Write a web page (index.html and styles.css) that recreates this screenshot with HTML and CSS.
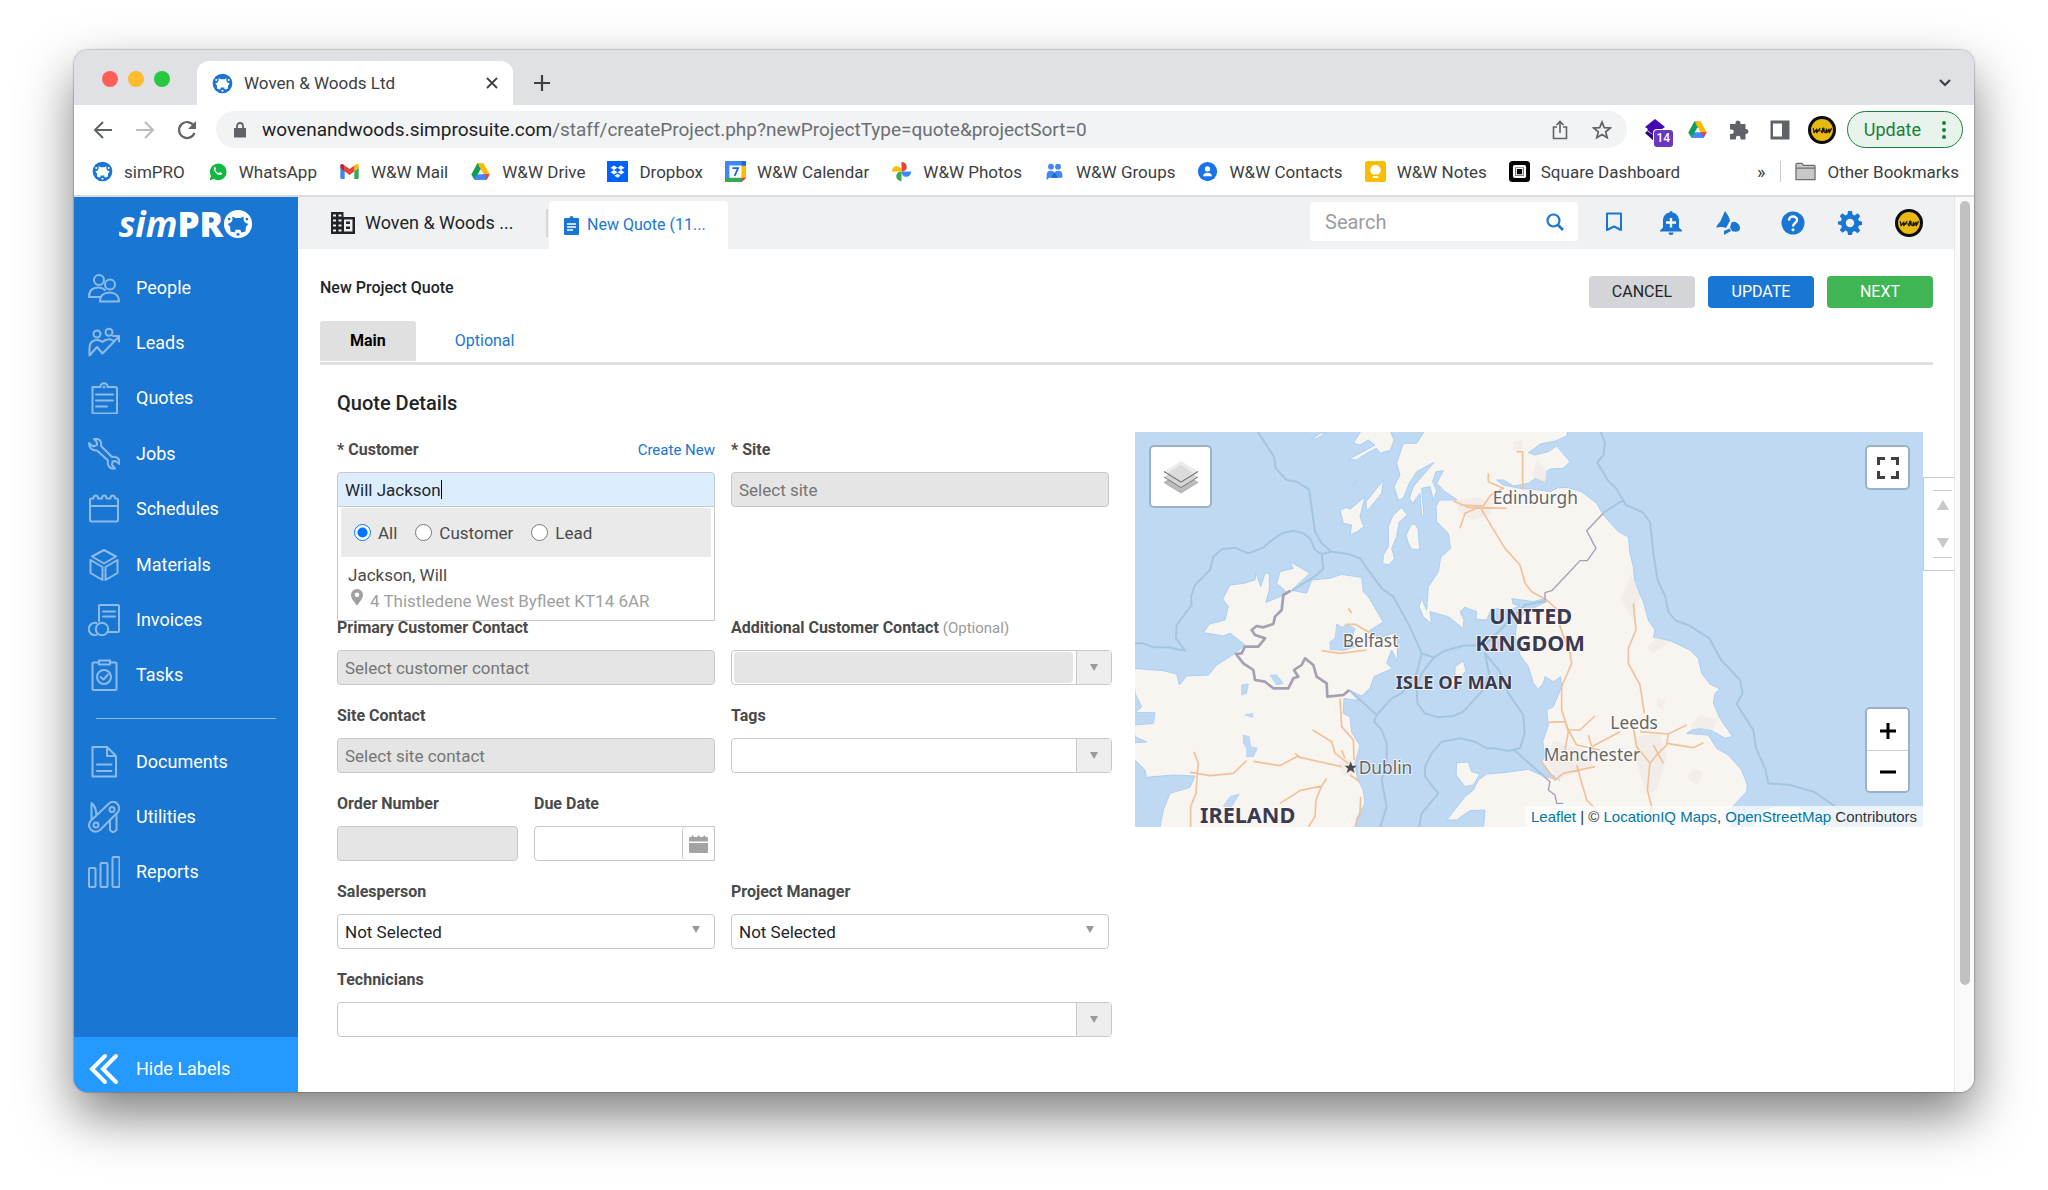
FILE: index.html
```html
<!DOCTYPE html>
<html lang="en">
<head>
<meta charset="utf-8">
<title>Woven &amp; Woods Ltd</title>
<link rel="stylesheet" href="styles.css">
</head>
<body>
<svg class="sprite" aria-hidden="true">
  <symbol id="gear-o" viewBox="0 0 32 32">
    <path fill-rule="evenodd" fill="currentColor" d="M16 1a15 15 0 1 1 0 30a15 15 0 0 1 0-30zM10 8L13.500 9.500H18.500L22 8L22 12L23.500 14.500L27 16L24.500 19L24 24L19.500 25L18.500 22H13.500L12.500 25L8 24L7.500 19L5 16L8.500 14.500L10 12z"/>
    <g fill="var(--dot)"><circle cx="6.500" cy="10.700" r="1.500"/><circle cx="25.500" cy="10.700" r="1.500"/><circle cx="16" cy="27" r="1.600"/></g>
  </symbol>
  <symbol id="drive" viewBox="0 0 24 24">
    <path fill="#0f9d58" d="M8.500 2.500h3.500l2.500 4.500L5 21.500 1.500 15.500z"/><path fill="#ffba00" d="M8.500 2.500h7l7 12.500h-7z"/><path fill="#4285f4" d="M8.500 15h14L19 21.500H5z"/><path fill="#ea4335" d="M15.500 15h7L19 21.500z"/><path fill="#4285f4" d="M5 21.500L8.500 15h8L19 21.500z"/><path fill="#fff" d="M12 9.500l3 5.500H9z"/>
  </symbol>
  <symbol id="avatar" viewBox="0 0 32 32">
    <circle cx="16" cy="16" r="16" fill="#0b0b0b"/><circle cx="16" cy="16" r="12.500" fill="#e8b90f"/>
    <path d="M6 14l1 5 3-4 0 4 4-5M17 19c-3 0-1-2.500.5-3-2-1 0-3 .8-1.500s-2.500 3 1.700 4.500l1.500-2M21 14.500l.5 4.500 2.500-4 .3 4 2.700-5" fill="none" stroke="#1c1804" stroke-width="1.500" stroke-linejoin="round"/><path d="M8 17h15" stroke="#1c1804"/>
  </symbol>
</svg>

<main class="window">
  <header class="tabstrip">
    <div class="lights"><i class="red"></i><i class="amber"></i><i class="green"></i></div>
    <div class="browser-tab">
      <svg class="ico21 brand"><use href="#gear-o"/></svg>
      <span class="grow">Woven &amp; Woods Ltd</span>
      <button class="bare" aria-label="Close tab"><svg width="12" height="12" viewBox="0 0 12 12"><path d="M1 1l10 10M11 1L1 11" stroke="#3c4043" stroke-width="1.800"/></svg></button>
    </div>
    <button class="bare new-tab" aria-label="New tab"><svg width="16" height="16" viewBox="0 0 16 16"><path d="M8 0v16M0 8h16" stroke="#3c4043" stroke-width="2.200"/></svg></button>
    <button class="bare tab-menu" aria-label="Search tabs"><svg width="12" height="8" viewBox="0 0 12 8"><path d="M1 1l5 5 5-5" fill="none" stroke="#3c4043" stroke-width="2.200"/></svg></button>
  </header>

  <div class="toolbar">
    <nav class="history" aria-label="History">
      <button class="bare" aria-label="Back"><svg width="20" height="20" viewBox="0 0 20 20"><path d="M19 10H2M10 2l-8 8 8 8" fill="none" stroke="#5f6368" stroke-width="2"/></svg></button>
      <button class="bare" aria-label="Forward"><svg width="20" height="20" viewBox="0 0 20 20"><path d="M1 10h17M10 2l8 8-8 8" fill="none" stroke="#babcbe" stroke-width="2"/></svg></button>
      <button class="bare" aria-label="Reload"><svg width="20" height="20" viewBox="0 0 20 20"><path d="M17.500 13a8 8 0 1 1-.8-7.500" fill="none" stroke="#5f6368" stroke-width="2.200"/><path d="M19 1v8h-8z" fill="#5f6368"/></svg></button>
    </nav>
    <div class="omnibox">
      <svg width="12" height="16" viewBox="0 0 12 16"><path d="M0 6h12v9.500H0z" fill="#5f6368"/><path d="M3 7V4a3 3 0 0 1 6 0v3" fill="none" stroke="#5f6368" stroke-width="1.800"/></svg>
      <span class="url grow"><b>wovenandwoods.simprosuite.com</b>/staff/createProject.php?newProjectType=quote&amp;projectSort=0</span>
      <button class="bare" aria-label="Share"><svg width="16" height="20" viewBox="0 0 16 20"><path d="M5 7H1.500v11.500h13V7H11M8 13V2M4.500 5L8 1.500 11.500 5" fill="none" stroke="#5f6368" stroke-width="1.600"/></svg></button>
      <button class="bare" aria-label="Bookmark this tab"><svg width="20" height="20" viewBox="0 0 20 20"><path d="M10 2l2.300 5.600 6 .4-4.600 3.900 1.500 5.900L10 14.600l-5.200 3.200 1.500-5.900L1.700 8l6-.4z" fill="none" stroke="#5f6368" stroke-width="1.700"/></svg></button>
    </div>
    <div class="extensions">
      <button class="bare badge-host" aria-label="Layers extension"><svg width="22" height="24" viewBox="0 0 22 24"><path d="M1 15l2-2 8 5 8-5 2 2-10 9z" fill="#2d0a7a"/><path d="M11 1l10 8-3 2 1 1-8 6-8-6 1-1-3-2z" fill="#4706b3"/></svg><span class="badge">14</span></button>
      <button class="bare" aria-label="Drive"><svg width="21" height="21"><use href="#drive"/></svg></button>
      <button class="bare" aria-label="Extensions"><svg width="20" height="20" viewBox="0 0 20 20"><path fill="#5f6368" d="M1 4h5.500V3a2.500 2.500 0 0 1 5 0v1H16.500V9h.5a2.500 2.500 0 0 1 0 5h-.5v5.500H11.500V18a2.300 2.300 0 0 0-4.600 0v1.500H1V14h1.500a2.300 2.300 0 0 0 0-4.600H1z"/></svg></button>
      <button class="bare" aria-label="Side panel"><svg width="20" height="20" viewBox="0 0 20 20"><path fill="#5f6368" fill-rule="evenodd" d="M.5.500h19v19H.5zM3 3.500v13h9v-13z"/></svg></button>
      <button class="bare" aria-label="Profile"><svg width="28" height="28"><use href="#avatar"/></svg></button>
      <button class="update">Update <svg width="4" height="18" viewBox="0 0 4 18" fill="#188038"><circle cx="2" cy="2" r="2"/><circle cx="2" cy="9" r="2"/><circle cx="2" cy="16" r="2"/></svg></button>
    </div>
  </div>

  <nav class="bookmarks" aria-label="Bookmarks">
    <a href="#"><svg class="ico21 brand"><use href="#gear-o"/></svg>simPRO</a>
    <a href="#"><svg class="ico21" viewBox="0 0 24 24"><path d="M3 22l1.500-5a9.500 9.500 0 1 1 3.500 3.600z" fill="#10b93f"/><path d="M8.500 7c-2 2 .5 5.500 2.500 7.200s5 2.800 6 .8c.5-1.200-.2-1.300-2-2.200-1.200-.3-1.200 1-1.900 1-1.500-.5-3-2-3.600-3.500.2-.6 1-.9.8-1.600C9.600 7 9.500 6.300 8.500 7z" fill="#fff"/></svg>WhatsApp</a>
    <a href="#"><svg class="ico21" viewBox="0 0 24 24"><path d="M1.500 8v11q0 1.500 1.500 1.500h3.500V11z" fill="#4285f4"/><path d="M17.500 11v9.500H21q1.500 0 1.500-1.500V8z" fill="#34a853"/><path d="M17.500 5l2-1.200c1.600-1 3 .2 3 1.700V8l-5 4z" fill="#fbbc04"/><path d="M6.500 12V5l5.500 4.200L17.500 5v7L12 16z" fill="#ea4335"/><path d="M1.500 5.500c0-1.500 1.400-2.700 3-1.700l2 1.200v7l-5-4z" fill="#c5221f"/></svg>W&amp;W Mail</a>
    <a href="#"><svg class="ico21"><use href="#drive"/></svg>W&amp;W Drive</a>
    <a href="#"><svg class="ico21" viewBox="0 0 24 24"><path d="M0 0h24v24H0z" fill="#0061fe"/><path d="M8 5l4 2.600-4 2.600-4-2.600zM16 5l4 2.600-4 2.600-4-2.600zM8 10.200l4 2.600-4 2.600-4-2.600zM16 10.200l4 2.600-4 2.600-4-2.600zM12 14.500l3.500 2.300L12 19l-3.500-2.200z" fill="#fff"/></svg>Dropbox</a>
    <a href="#"><svg class="ico21" viewBox="0 0 24 24"><path d="M0 1q0-1 1-1h22q1 0 1 1v23H0z" fill="#4285f4"/><path d="M19 5h5v15h-5z" fill="#fbbc04"/><path d="M0 19h19v5H1q-1 0-1-1z" fill="#34a853"/><path d="M19 19h5l-5 5z" fill="#ea4335"/><path d="M24 20v4h-5z" fill="#fff"/><path d="M19 0h4q1 0 1 1v4h-5z" fill="#1967d2"/><path d="M5 5h14v14H5z" fill="#fff"/><path d="M8.500 8h6.500l-4 9" fill="none" stroke="#1967d2" stroke-width="2"/></svg>W&amp;W Calendar</a>
    <a href="#"><svg class="ico21" viewBox="0 0 24 24"><path d="M12 1c4 0 6 3 6 5.500S16.500 12 12 12z" fill="#ea4335"/><path d="M23 12c0 4-3 6-5.500 6S12 16.500 12 12z" fill="#4285f4"/><path d="M12 23c-4 0-6-3-6-5.500S7.500 12 12 12z" fill="#34a853"/><path d="M1 12c0-4 3-6 5.500-6S12 7.500 12 12z" fill="#fbbc04"/></svg>W&amp;W Photos</a>
    <a href="#"><svg class="ico21" viewBox="0 0 24 24" fill="#4285f4"><circle cx="8" cy="6.500" r="3.300"/><circle cx="16" cy="6.500" r="3.300"/><path d="M3 22v-6q0-5 5-5 3 0 4 2 1-2 4-2 5 0 5 5v3H6z"/><path d="M8 19l4-6 4 6z" fill="#1967d2"/></svg>W&amp;W Groups</a>
    <a href="#"><svg class="ico21" viewBox="0 0 24 24"><circle cx="12" cy="12" r="11" fill="#1a73e8"/><circle cx="12" cy="9" r="3" fill="#fff"/><path d="M7 17.500q0-4 5-4t5 4z" fill="#fff"/></svg>W&amp;W Contacts</a>
    <a href="#"><svg class="ico21" viewBox="0 0 24 24"><rect width="24" height="24" rx="3" fill="#fbbc04"/><path d="M9 15.500a6 6 0 1 1 6 0z" fill="#fff"/><path d="M9 17h6v2.500H9z" fill="#fff"/></svg>W&amp;W Notes</a>
    <a href="#"><svg class="ico21" viewBox="0 0 24 24"><rect width="24" height="24" rx="4" fill="#000"/><rect x="4.500" y="4.500" width="15" height="15" rx="2" fill="#fff"/><rect x="7" y="7" width="10" height="10" rx="1"/><path d="M7.500 7.500h9v9h-9z" fill="#fff"/><path d="M9 9h6v6H9z"/></svg>Square Dashboard</a>
    <span class="grow"></span>
    <button class="bare more" aria-label="More bookmarks">»</button>
    <a href="#" class="other"><svg class="ico21" viewBox="0 0 22 20"><path d="M1 18.500v-16q0-1 1-1h5l2 2h11q1 0 1 1v14z" fill="#c8c8c8" stroke="#6e6e6e" stroke-width="1.300"/><path d="M1 6.500h20" stroke="#6e6e6e" stroke-width="1.300"/></svg>Other Bookmarks</a>
  </nav>

  <div class="app">
    <aside class="sidebar">
      <a class="logo" href="#" aria-label="simPRO"><em>sim</em><strong>PR</strong><svg width="30" height="30"><use href="#gear-o"/></svg></a>
      <ul class="menu main-menu">
        <li><a href="#"><svg class="ico32" viewBox="0 0 32 32"><circle cx="11" cy="8" r="5"/><circle cx="22" cy="12.500" r="5"/><path d="M13 25H1c0-7 4-9.500 9.500-9.500 3 0 5 1 6.500 2.500M12 29.500h19c0-6-4-9-9.500-9s-9.500 3-9.500 9z"/></svg>People</a></li>
        <li><a href="#"><svg class="ico32" viewBox="0 0 32 32"><circle cx="9" cy="7" r="3.500"/><circle cx="21" cy="5.300" r="3.500"/><path d="M1.500 28.500V21c0-8 8-10 13-6 3-3 7-3.500 10.500-1.500M1.500 28.500L9 20l5.500 6.500L30 10.500M25 9h6v5.500"/></svg>Leads</a></li>
        <li><a href="#"><svg class="ico32" viewBox="0 0 32 32"><path d="M4.500 5h8c0-5 7-5 7 0h8q1.500 0 1.500 1.500v24q0 1-1 1H5.500q-1 0-1-1zM8 12.500h17M8 18.500h17M8 24.500h11"/><circle cx="16" cy="5" r=".6"/></svg>Quotes</a></li>
        <li><a href="#"><svg class="ico32" viewBox="0 0 32 32"><path d="M6 1c5-1 8 2 7 7l11 11c5-1 8 2 7.500 7l-4-3-3 .5L24 27l3 3.500c-5 1-8-3-7-8L9 12.500C4 13 1 10 1 5l4 3.500L9 7l-.5-3.500z"/></svg>Jobs</a></li>
        <li><a href="#"><svg class="ico32" viewBox="0 0 32 32"><path d="M2 13h28M2 7q0-1.500 1.500-1.500h2c0-4 4.500-4 4.500 0h4c0-4 4.500-4 4.500 0h4c0-4 4.500-4 4.500 0h1.500Q30 5.500 30 7v20q0 1.500-1.500 1.500h-25Q2 28.500 2 27z"/></svg>Schedules</a></li>
        <li><a href="#"><svg class="ico32" viewBox="0 0 32 32"><path d="M16 1l12 6.500-12 7-12-7zM2.500 11l12 7v13l-12-7zM29.500 11l-12 7v13l12-7z"/></svg>Materials</a></li>
        <li><a href="#"><svg class="ico32" viewBox="0 0 32 32"><path d="M11 17V2q0-1 1-1h18q1 0 1 1v25q0 1-1 1H20M15 7.500h12M15 12.500h12"/><circle cx="14" cy="25" r="6.200"/><path d="M8.500 19A6.200 6.200 0 1 0 8.500 31"/></svg>Invoices</a></li>
        <li><a href="#"><svg class="ico32" viewBox="0 0 32 32"><path d="M11 3.500H5.500q-1 0-1 1V30q0 1 1 1h22q1 0 1-1V4.500q0-1-1-1H22M11 1.500h11v4H11z"/><circle cx="16" cy="18" r="7"/><path d="M12.500 18l3 2.500L20 15.500"/></svg>Tasks</a></li>
      </ul>
      <hr>
      <ul class="menu sub-menu">
        <li><a href="#"><svg class="ico32" viewBox="0 0 32 32"><path d="M4.500 1H19l9 9v20.500h-23.500zM19 1v9h9M9 18.500h14.500M9 25h14.500"/></svg>Documents</a></li>
        <li><a href="#"><svg class="ico32" viewBox="0 0 32 32"><path d="M2.500 20L21 2.500c6-5 13 3 9 8.500L12 29C5.500 34-2 26.500 2.500 20zM3.500 18.500V2C7.500 5 8 9 8.500 14M22 19v10l3 2.500 3.500-2.500V14"/><circle cx="24" cy="8.500" r="2.500"/><circle cx="8" cy="24" r="2.500"/></svg>Utilities</a></li>
        <li><a href="#"><svg class="ico32" viewBox="0 0 32 32"><rect x="1" y="12" width="6.500" height="19" rx="1"/><rect x="12.500" y="7" width="7" height="24" rx="1"/><rect x="24.500" y="1" width="7" height="30" rx="1"/></svg>Reports</a></li>
      </ul>
      <button class="hide-labels"><svg width="32" height="32" viewBox="0 0 32 32"><path d="M17 3L4 16l13 13M28 3L15 16l13 13" fill="none" stroke="#fff" stroke-width="4" stroke-linecap="round"/></svg>Hide Labels</button>
    </aside>

    <section class="content">
      <header class="app-bar">
        <a class="company" href="#"><svg width="24" height="22" viewBox="0 0 24 22"><path fill="#212529" fill-rule="evenodd" d="M0 0h12.500v5H24v17H0zM2 2.500v2h3v-2zM7.500 2.500v2h3v-2zM2 7.500v2h3v-2zM7.500 7.500v2h3v-2zM2 12.500v2h3v-2zM7.500 12.500v2h3v-2zM2 17.500v2h3v-2zM7.500 17.500v2h3v-2zM13 7.500v12h8.500v-12zM15 9.500h4v2.500h-4zM15 14.500h4v2.500h-4z"/></svg>Woven &amp; Woods ...</a>
        <a class="quote-tab" href="#"><svg width="15" height="19" viewBox="0 0 15 19"><path fill="#1976d2" d="M0 3q0-1 1-1h4.500a2 2 0 0 1 4 0H14q1 0 1 1v15q0 1-1 1H1q-1 0-1-1z"/><path d="M3 8h9M3 11h9M3 14h6" stroke="#fff" stroke-width="1.400"/></svg>New Quote (11...</a>
        <span class="grow"></span>
        <div class="search"><input type="search" placeholder="Search" aria-label="Search"><button class="bare" aria-label="Go"><svg width="18" height="18" viewBox="0 0 18 18"><circle cx="7.500" cy="7.500" r="6" fill="none" stroke="#1976d2" stroke-width="2.200"/><path d="M12 12l5 5" stroke="#1976d2" stroke-width="2.600"/></svg></button></div>
        <div class="app-icons">
          <button class="bare" aria-label="Bookmarks"><svg width="24" height="24" viewBox="0 0 24 24"><path d="M5 2.500h14V19l-7-3.500-7 3.500z" fill="none" stroke="#1976d2" stroke-width="2" stroke-linejoin="round"/></svg></button>
          <button class="bare" aria-label="Add notification"><svg width="24" height="24" viewBox="0 0 24 24"><path fill="#1976d2" d="M10.500 1.500a1.500 1.500 0 0 1 3 0c4.500 1 6.500 4 6.500 8v7l3 3v1H1v-1l3-3v-7c0-4 2-7 6.500-8zM9.500 21.500h5a2.500 2.500 0 0 1-5 0z"/><path d="M12 7v9.500M7 11.500h10" stroke="#fff" stroke-width="2.400"/></svg></button>
          <button class="bare" aria-label="Activity"><svg width="24" height="24" viewBox="0 0 24 24" fill="#1976d2"><path d="M9 0c1 1.500 4 5 5 9.500L10 17c-4-1.500-7-1-10-.5C1.500 14 2 13 4 11zM8 20l5.500-2.500 1.500 2.500-7 4zM14 16.500l1.500-5c3-2 8 1 8.500 5s-4 5-8 3.500z"/></svg></button>
          <button class="bare help" aria-label="Help"><svg width="24" height="24" viewBox="0 0 24 24"><circle cx="12" cy="12" r="11.500" fill="#1976d2"/><path d="M8 9.500c0-5.500 8-5 8-.5 0 3-4 3-4 6.500" fill="none" stroke="#fff" stroke-width="2.400"/><circle cx="12" cy="18.800" r="1.500" fill="#fff"/></svg></button>
          <button class="bare" aria-label="Settings"><svg width="24" height="24" viewBox="0 0 24 24"><path fill="#1976d2" fill-rule="evenodd" d="M10 0h4l.6 3.600 2 .9 3-2.200 2.600 2.600-2.100 3 .9 2.100 3.500.5v3.500l-3.500.6-.9 2 2.100 3-2.600 2.700-3-2.200-2 .9L14 24h-4l-.6-3.500-2-.9-3 2.200-2.600-2.700 2.100-3-.9-2L0 13.500V10.500l3-.5.9-2.100-2.100-3 2.600-2.600 3 2.200 2-.9zM12 7.800a4.200 4.200 0 1 0 0 8.400a4.200 4.200 0 0 0 0-8.400z"/></svg></button>
          <button class="bare" aria-label="Account"><svg width="28" height="28"><use href="#avatar"/></svg></button>
        </div>
      </header>

      <div class="page">
        <div class="title-row">
          <h1>New Project Quote</h1>
          <div class="actions"><button class="btn cancel">CANCEL</button><button class="btn primary">UPDATE</button><button class="btn next">NEXT</button></div>
        </div>
        <nav class="tabs"><a class="active" href="#">Main</a><a href="#">Optional</a></nav>

        <div class="details">
          <h2>Quote Details</h2>
          <div class="columns">
            <form class="form">
              <div class="field tall">
                <div class="label-row"><label for="customer">* Customer</label><a href="#">Create New</a></div>
                <div class="lookup">
                  <input id="customer" class="ctl focus" value="Will Jackson">
                  <span class="caret"></span>
                  <div class="suggest">
                    <div class="kinds">
                      <label><input type="radio" name="kind" checked>All</label>
                      <label><input type="radio" name="kind">Customer</label>
                      <label><input type="radio" name="kind">Lead</label>
                    </div>
                    <a class="result" href="#">Jackson, Will<span><svg width="12" height="17" viewBox="0 0 12 17"><path fill="#a0a0a0" fill-rule="evenodd" d="M6 0a6 6 0 0 1 6 6c0 4-4 7-6 11C4 13 0 10 0 6a6 6 0 0 1 6-6zM6 3.500a2.300 2.300 0 1 0 0 4.600a2.300 2.300 0 0 0 0-4.600z"/></svg>4 Thistledene West Byfleet KT14 6AR</span></a>
                  </div>
                </div>
              </div>
              <div class="field"><label for="site">* Site</label><input id="site" class="ctl" placeholder="Select site" disabled></div>
              <div class="field"><label for="primary">Primary Customer Contact</label><input id="primary" class="ctl" placeholder="Select customer contact" disabled></div>
              <div class="field"><label for="additional">Additional Customer Contact <small>(Optional)</small></label><div class="combo wide"><input id="additional" disabled><button type="button" aria-label="Open list"></button></div></div>
              <div class="field"><label for="site-contact">Site Contact</label><input id="site-contact" class="ctl" placeholder="Select site contact" disabled></div>
              <div class="field"><label for="tags">Tags</label><div class="combo wide"><input id="tags"><button type="button" aria-label="Open list"></button></div></div>
              <div class="pair">
                <div class="field"><label for="order">Order Number</label><input id="order" class="ctl" disabled></div>
                <div class="field"><label for="due">Due Date</label><div class="date"><input id="due"><button type="button" aria-label="Pick a date"><svg width="19" height="18" viewBox="0 0 19 18" fill="#a3a3a3"><path d="M0 6.500V3q0-1 1-1h1.500q1-3.500 2.500 0h3q1.500-3.500 3 0h3q1.500-3.500 2.500 0H18q1 0 1 1v3.500zM0 8h19v9q0 1-1 1H1q-1 0-1-1z"/></svg></button></div></div>
              </div>
              <div class="field start"><label for="sales">Salesperson</label><div class="pick"><select id="sales" class="ctl"><option>Not Selected</option></select></div></div>
              <div class="field"><label for="manager">Project Manager</label><div class="pick"><select id="manager" class="ctl"><option>Not Selected</option></select></div></div>
              <div class="field full"><label for="tech">Technicians</label><div class="combo wide"><input id="tech"><button type="button" aria-label="Open list"></button></div></div>
            </form>

            <div class="map">
              <svg class="map-art" viewBox="45 36 2364 1185" preserveAspectRatio="xMidYMid slice">
                <g fill="#f8f4f0" stroke="#a9cff5" stroke-width="3" stroke-linejoin="round">
                  <path d="M915 30L890 70 850 70 830 130 840 165 822 200 835 240 850 235 868 190 890 155 942 127 905 170 880 200 868 235 878 250 900 220 905 285 912 290 905 205 930 200 940 240 950 212 938 185 948 155 970 152 950 190 975 215 1012 240 958 240 948 260 950 305 985 340 992 385 962 412 955 455 925 500 920 570 905 535 897 560 910 590 935 612 930 575 985 590 1010 610 1030 626 1032 600 1020 575 1035 562 1070 575 1068 598 1100 600 1115 565 1170 570 1200 558 1180 552 1175 536 1240 545 1275 535 1280 545 1215 575 1190 610 1185 650 1200 705 1225 740 1240 790 1255 808 1270 790 1275 770 1300 785 1322 770 1325 800 1300 860 1280 870 1285 915 1268 965 1275 1010 1265 1025 1290 1060 1320 1080 1275 1070 1225 1048 1150 1058 1100 1062 1075 1080 1060 1110 1035 1130 980 1200 1010 1200 1050 1172 1095 1170 1090 1230H1835L1838 1160 1880 1115 1882 1095 1865 1050 1825 1005 1790 985 1765 945 1700 940 1720 928 1760 925 1790 940 1815 955 1838 950 1800 895 1780 850 1785 820 1800 807 1770 792 1745 760 1735 715 1710 690 1650 662 1600 652 1605 630 1585 600 1570 545 1545 490 1540 440 1530 400 1525 350 1495 335 1450 285 1430 250 1385 215 1345 203 1315 203 1290 215 1260 210 1200 205 1150 195 1130 180 1150 180 1180 198 1225 190 1262 165 1290 147 1330 145 1350 125 1310 78 1285 95 1245 105 1225 98 1262 72 1310 62 1340 48 1345 30z"/>
                  <path d="M790 405L805 380 805 320 818 288 845 262 862 285 838 305 830 350 815 385 824 415 808 434 788 432z"/>
                  <path d="M870 320Q885 300 895 330L897 368 900 388 875 388 865 370 858 345z"/>
                  <path d="M660 270L680 262 690 268 735 230 720 290 732 320 712 335 690 345 695 315 670 310zM740 275L738 245 790 180 785 220zM572 60L600 40 620 38 590 55zM700 70L725 30 810 30 822 60 812 90 780 100 770 85 740 100 710 120 685 118 720 100 765 75 745 60 720 75zM695 200L708 182 702 198z"/>
                  <path d="M1030 722L1038 752 990 812 970 812 985 790 1005 765 1005 740z"/>
                  <path d="M1010 1028L1045 1026 1055 1055 1080 1062 1060 1095 1035 1100 1008 1065z"/>
                  <path d="M1900 1221Q1910 1165 1960 1160L2040 1160 2110 1221z"/>
                  <path d="M40 745L130 752 170 762 178 795 200 768 265 765 290 735 345 700 375 675 350 655 330 640 310 648 250 638 268 612 315 600 325 560 308 537 330 495 372 490 405 480 408 457 422 500 435 460 448 460 448 510 438 547 480 530 498 515 470 490 480 455 520 445 508 424 570 460 515 510 560 520 575 480 630 475 665 463 725 472 730 515 745 530 790 606 748 632 770 655 820 640 833 665 832 725 815 690 800 730 818 745 762 770 750 805 725 828 690 812 715 842 672 835 670 880 690 890 695 935 720 978 705 1030 712 1075 730 1110 735 1150 710 1195 705 1230H118L130 1170 150 1120 210 1102 225 1068 160 1065 80 1072 75 1050 40 1015 40 968 80 966 45 950 40 915 100 910 105 878 45 878 65 860 45 820z"/>
                </g>
                <g fill="#bfd9f2" stroke="#a9cff5" stroke-width="2">
                  <path d="M650 612L668 622 678 612 705 625 700 645 672 655 705 680 672 692 630 688 630 665 645 655zM365 795L385 792 380 820 365 825zM375 885L398 880 398 892zM370 945L388 950 392 980 412 985 400 1010 380 1010 380 985 370 970zM330 1130L358 1122 335 1160 310 1158zM450 765L470 765 490 790 470 795z"/>
                </g>
                <g fill="#f2ede8">
                  <path d="M1010 240L1070 232 1120 250 1110 285 1060 300 1015 275zM1235 170L1250 125 1280 150 1275 185zM1180 65L1205 60 1210 85 1180 90zM1500 540L1535 460 1560 530 1540 600 1510 550zM1580 680L1610 655 1650 665 1600 700zM1540 950L1620 940 1640 1010 1610 1110 1580 1120 1550 1030zM1710 920L1740 885 1790 900 1780 930zM1300 960L1390 990 1420 1040 1310 1080 1280 1020zM1700 1075L1720 1045 1750 1060 1730 1095zM655 1025L700 1020 700 1065 665 1065zM1610 835L1635 840 1630 870 1612 862z"/>
                </g>
                <g fill="none" stroke="#a3c6de" stroke-width="6" stroke-linejoin="round">
                  <path d="M410 30L462 110 467 145 500 180 530 185 567 208 585 335 605 370 635 395 685 402 720 415 785 505 820 530 872 625 905 700 942 712 905 760 890 800 892 850 915 880 955 892 1000 888 1030 875 1085 815 1108 765 1095 700 1140 755 1165 820 1210 885 1214 940 1200 985 1165 993 1125 985 1100 985 1065 965 1020 955 965 965 935 1000 915 1040 915 1070 955 1120 905 1180 895 1230M942 712L975 692 1030 677 1095 675 1140 630 1215 555 1275 543"/>
                  <path d="M45 670L70 670 100 682 145 682 195 692 168 655 170 615 215 555 213 530 225 495 270 450 280 410 305 388 345 383 385 400 430 383 450 365 485 340 520 332 550 340 570 355 585 390 605 402 610 445 590 465 515 513M605 402L635 395M905 700L890 760 845 820 815 835 770 885 690 812M770 885L762 905 785 930 800 970 800 1020 785 1080 800 1160 778 1230M1180 988L1275 1072"/>
                  <path d="M1440 30L1455 70 1450 105 1432 128 1465 183 1487 203 1518 255 1568 277 1590 305 1600 400 1613 480 1636 530 1645 575 1665 600 1708 617 1768 655 1805 722 1860 780 1868 820 1850 852 1900 930 1908 985 1935 1045 1945 1090 2010 1095 2082 1115 2160 1170 2190 1230M1450 278L1510 240"/>
                </g>
                <g fill="none" stroke="#f0c29a" stroke-width="5" stroke-linejoin="round">
                  <path d="M222 995L235 1030 232 1060 210 1057M232 1060L270 1067 340 1060 380 1022M400 1024L480 1037 530 1010 665 1040M525 1000L545 1015M232 1060L228 1120 212 1160 212 1221M480 1150L540 1112 605 1098 620 1075M605 1098L588 1140 585 1190 565 1221M578 930L635 965 645 1000 685 1030M660 835L665 920 700 960 702 1020M665 990L675 1015M690 1065L718 1085M722 1130L720 1180 705 1221M605 692L660 700 740 690M678 613L705 613 750 638M685 565L695 580"/>
                  <path d="M1000 243L1045 262 1160 265M1020 255L1090 258 1112 225 1150 205 1105 185 1105 160M1190 95L1208 95 1208 210M1020 325L1035 280 1080 260 1115 320 1155 385 1200 435 1215 490 1235 515 1280 540 1325 580 1320 620 1350 700 1355 730 1325 800 1325 870 1345 930 1370 975 1440 990M1285 907L1335 905 1345 935 1335 990M1345 930L1380 930 1425 888M1405 945L1415 980 1500 935M1265 1025L1305 1080 1330 1060 1425 1040M1370 1035L1400 1140 1440 1180M1540 550L1548 630 1525 685 1525 730 1560 795 1573 880M1540 920L1550 980 1590 1030 1582 1110 1595 1160 1580 1200M1560 935L1645 942 1700 915M1645 942L1640 975 1610 1005 1590 1030M1640 970L1720 983 1750 968M1600 975L1630 1030"/>
                </g>
                <g fill="none" stroke="#a69fb2" stroke-linejoin="round">
                  <path stroke-width="8" d="M512 512L490 525 485 570 465 590 460 612 430 622 410 618 395 630 405 645 435 655 415 680 375 680 365 700 348 702 370 730 400 750 405 780 435 785 460 805 505 805 520 775 535 770 522 750 545 735 555 715 580 735 590 770 620 790 622 830 670 825 688 810"/>
                  <path stroke-width="4" d="M1275 540L1275 518 1295 512 1345 460 1380 422 1402 422 1428 385 1400 332 1450 280M1275 1072L1290 1085 1285 1110 1305 1125 1310 1150 1330 1150"/>
                </g>
                <g class="city"><text x="1118" y="251">Edinburgh</text><text x="668" y="682">Belfast</text><text x="716" y="1062">Dublin</text><text x="1471" y="928">Leeds</text><text x="1271" y="1023">Manchester</text></g>
                <path fill="#4a4a4a" d="M692 1024l5 13h13l-10 9 4 13-12-8-12 8 4-13-10-9h13z"/>
                <g class="country"><text x="1108" y="611">UNITED</text><text x="1066" y="692">KINGDOM</text><text x="240" y="1208">IRELAND</text></g>
                <text class="isle" x="827" y="806">ISLE OF MAN</text>
              </svg>
              <button class="map-btn layers" aria-label="Layers"><svg width="36" height="34" viewBox="0 0 36 34"><path d="M1 22.500L18 12l17 10.500L18 33z" fill="#bbb" stroke="#999" stroke-width=".6"/><path d="M1 17L18 7l17 10-17 10.500z" fill="#d6d6d6"/><path d="M1 17l17 10.500L35 17" fill="none" stroke="#777"/><path d="M1 11.500L18 1l17 10.500L18 22z" fill="#ececec"/><path d="M8 11L18 5l12 8-12 8L5 13z" fill="#dcdcdc"/><path d="M1 11.500L18 22l17-10.500" fill="none" stroke="#777" stroke-width="1.200"/></svg></button>
              <button class="map-btn full-screen" aria-label="Full screen"><svg width="22" height="22" viewBox="0 0 22 22"><path d="M1.500 8V1.500H8M14 1.500h6.500V8M20.500 14v6.500H14M8 20.500H1.500V14" fill="none" stroke="#404040" stroke-width="3"/></svg></button>
              <div class="map-btn zoom"><button aria-label="Zoom in"><svg width="16" height="16" viewBox="0 0 16 16"><path d="M8 0v16M0 8h16" stroke="#000" stroke-width="3"/></svg></button><button aria-label="Zoom out"><svg width="16" height="16" viewBox="0 0 16 16"><path d="M0 8h16" stroke="#000" stroke-width="3"/></svg></button></div>
              <p class="credit"><a href="#">Leaflet</a> | © <a href="#">LocationIQ Maps</a>, <a href="#">OpenStreetMap</a> Contributors</p>
            </div>
          </div>
        </div>
      </div>
      <div class="jump"><button aria-label="Scroll to top"><i class="up"></i></button><button aria-label="Scroll to bottom"><i class="down"></i></button></div>
    </section>
    <div class="scrollbar"><i></i></div>
  </div>
</main>
</body>
</html>
```
FILE: styles.css
```css
* { box-sizing: border-box; }
body { margin: 0; padding: 50px 74px 98px; background: #fff; font: 16px/20px Roboto, sans-serif; color: #212529; }
a { color: #1976d2; text-decoration: none; }
button, input, select { font: inherit; color: inherit; }
h1, h2, p, ul { margin: 0; padding: 0; }
svg { display: block; flex: none; }
ul { list-style: none; }
.sprite { position: absolute; width: 0; height: 0; }
.bare { border: 0; background: none; padding: 0; }
.grow { flex: 1; }
.ico21 { width: 21px; height: 21px; }
.ico32 { width: 32px; height: 32px; fill: none; stroke: #8dbbe9; stroke-width: 2; stroke-linejoin: round; stroke-linecap: round; }
.brand { color: #1976d2; --dot: #fff; }

.window { display: flex; flex-direction: column; min-height: calc(100vh - 148px); border-radius: 14px; overflow: hidden; background: #fff; box-shadow: 0 0 2px rgba(0,0,0,.6), 0 24px 52px rgba(0,0,0,.5); }

.tabstrip { display: flex; height: 55px; background: #dfe1e5; }
.lights { display: flex; gap: 10px; padding: 21px 27px 0 28px; }
.lights i { width: 16px; height: 16px; border-radius: 50%; }
.red { background: #ff5f57; } .amber { background: #febc2e; } .green { background: #28c840; }
.browser-tab { display: flex; align-items: center; gap: 11px; width: 316px; margin-top: 11px; padding: 0 15px 0 15px; border-radius: 12px 12px 0 0; background: #fff; color: #3c4043; font-size: 17px; }
.new-tab { margin: 11px 0 0 21px; }
.tab-menu { margin: 11px 23px 0 auto; }

.toolbar { display: flex; align-items: center; height: 49px; padding: 0 11px 0 19px; }
.history { display: flex; gap: 22px; margin-right: 19px; }
.omnibox { display: flex; flex: 1; align-items: center; gap: 16px; height: 37px; padding: 0 15px 0 18px; border-radius: 19px; background: #f1f3f4; min-width: 0; }
.omnibox .bare + .bare { margin-left: 8px; }
.url { font-size: 19px; line-height: 24px; color: #6b6e72; white-space: nowrap; overflow: hidden; }
.url b { font-weight: 400; color: #202124; }
.extensions { display: flex; align-items: center; gap: 21px; margin-left: 17px; }
.badge-host { position: relative; }
.badge { position: absolute; left: 10px; top: 12px; width: 19px; height: 17px; border-radius: 3px; background: #6b37bf; color: #fff; font: 500 12px/17px Roboto, sans-serif; text-align: center; box-shadow: 0 0 0 1px #fff; }
.extensions .bare:nth-child(5) { margin-left: -3px; }
.update { display: flex; align-items: center; gap: 21px; height: 37px; margin-left: -10px; padding: 0 16px; border: 1px solid #188038; border-radius: 19px; background: #e8f3ec; color: #188038; font-size: 18px; }

.bookmarks { display: flex; align-items: center; gap: 22px; height: 43px; padding: 0 15px 6px 18px; border-bottom: 2px solid #dadce0; color: #3c4043; font-size: 17px; white-space: nowrap; }
.bookmarks a { display: flex; align-items: center; gap: 11px; color: inherit; }
.more { font-size: 18px; margin-right: -7px; }
.bookmarks .other { padding-left: 14px; border-left: 1px solid #ccc; }

.app { display: flex; flex: 1; }
.sidebar { display: flex; flex-direction: column; width: 224px; flex: none; background: #1976d2; }
.logo { display: flex; align-items: center; justify-content: center; height: 63px; padding: 0 0 10px; color: #fff; --dot: #1976d2; font: 700 35px/40px "Open Sans", sans-serif; }
.menu { display: grid; grid-auto-rows: 1fr; }
.main-menu { height: 443px; }
.sub-menu { height: 166px; }
.menu a, .hide-labels { display: flex; align-items: center; gap: 16px; height: 100%; padding-left: 14px; color: #fff; font-size: 18px; line-height: 24px; }
.sidebar hr { width: 180px; margin: 15px 22px; border: 0; border-top: 1px solid #8dbbe9; }
.hide-labels { height: 55px; margin-top: auto; padding-top: 9px; border: 0; background: #2499ff; }

.content { position: relative; flex: 1; min-width: 0; }
.app-bar { display: flex; height: 52px; background: #eff1f3; }
.company { display: flex; align-items: center; gap: 10px; width: 250px; margin: 12px 0; padding-left: 33px; border-right: 2px solid #d5d7da; color: #212529; font-size: 18px; }
.quote-tab { display: flex; align-items: center; gap: 8px; width: 179px; margin: 4px 0 0 1px; padding-left: 15px; border-radius: 4px 4px 0 0; background: #fff; }
.search { display: flex; align-items: center; width: 268px; height: 39px; margin-top: 5px; padding: 0 14px 0 15px; border-radius: 4px; background: #fff; }
.search input { flex: 1; min-width: 0; border: 0; padding: 0; outline: 0; font-size: 20px; }
.search input::placeholder { color: #9a9da1; }
.app-icons { display: flex; align-items: center; gap: 33px; margin: 0 31px 0 24px; }
.help { margin-left: 8px; }

.page { padding: 27px 21px 40px 22px; }
.title-row { display: flex; justify-content: space-between; align-items: flex-start; }
h1 { padding-top: 2px; font: 500 16px/20px Roboto, sans-serif; }
.actions { display: flex; gap: 13px; }
.btn { width: 106px; height: 32px; border: 0; border-radius: 4px; color: #fff; }
.cancel { background: #d3d5d9; color: #212529; } .primary { background: #1976d2; } .next { background: #3fb554; }
.tabs { display: flex; margin-top: 13px; padding-bottom: 1px; border-bottom: 3px solid #e0e0e0; }
.tabs a { padding: 10px 30px; border-radius: 3px 3px 0 0; }
.tabs a + a { padding-left: 39px; }
.tabs .active { background: #e0e0e0; color: #000; font-weight: 700; }

.details { padding: 26px 10px 0 17px; }
h2 { font: 500 20px/24px Roboto, sans-serif; margin-bottom: 17px; }
.columns { display: flex; gap: 26px; align-items: flex-start; }
.form { display: grid; grid-template-columns: 378px 378px; gap: 21px 16px; padding-top: 8px; color: #4a4a4a; }
.field { display: flex; flex-direction: column; gap: 12px; min-width: 0; }
.field > label, .label-row label { font-weight: 700; }
.field small { font-size: 15px; font-weight: 400; color: #999; }
.label-row { display: flex; justify-content: space-between; }
.label-row a { font-size: 15px; }
.tall { height: 157px; }
.full { grid-column: 1 / 3; }
.start { grid-column: 1; }
.pair { display: grid; grid-template-columns: 1fr 1fr; gap: 16px; }
.ctl { display: block; width: 100%; height: 35px; padding: 0 7px; border: 1px solid #c8c8c8; border-radius: 4px; background: #fff; font-size: 17px; color: #212529; outline: 0; }
.ctl:disabled { background: #e5e5e5; }
.ctl::placeholder { color: #757575; }
.ctl.focus { background: #dceefe; border-radius: 4px 4px 0 0; }
.lookup { position: relative; }
.caret { position: absolute; left: 104px; top: 8px; width: 1px; height: 19px; background: #000; }
.suggest { position: absolute; z-index: 2; left: 0; right: 0; top: 35px; border: 1px solid #c8c8c8; border-top: 0; background: #fff; font-size: 17px; line-height: 24px; }
.kinds { display: flex; gap: 18px; margin: 1px 3px 0; padding: 12px 13px; height: 49px; background: #eaeaea; }
.kinds label { display: flex; align-items: center; gap: 7px; }
.kinds input { width: 17px; height: 17px; margin: 0; accent-color: #0075ff; }
.result { display: block; padding: 6px 10px 7px; color: #4a4a4a; }
.result span { display: flex; align-items: flex-start; gap: 7px; padding: 2px 0 0 3px; color: #a0a0a0; }
.combo { display: flex; height: 35px; border: 1px solid #c8c8c8; border-radius: 4px; overflow: hidden; background: #fff; }
.wide { margin-right: -3px; }
.combo input { flex: 1; min-width: 0; margin: 1px 3px 1px 2px; border: 0; border-radius: 4px; outline: 0; background: #fff; }
.combo input:disabled { background: #e5e5e5; }
.combo button { display: grid; place-items: center; width: 35px; border: 0; border-left: 1px solid #c8c8c8; background: #eee; }
.combo button::before, .pick::after { content: ""; border: 4px solid transparent; border-top: 7px solid #999; border-bottom: 0; }
.date { display: flex; height: 35px; border: 1px solid #c8c8c8; border-radius: 4px 0 0 4px; }
.date input { flex: 1; min-width: 0; border: 0; outline: 0; background: none; }
.date button { display: grid; place-items: center; width: 32px; padding: 0; border: 0; border-left: 1px solid #c8c8c8; border-radius: 4px; background: #fff; }
.pick { position: relative; }
.pick select { appearance: none; }
.pick::after { position: absolute; right: 15px; top: 12px; }

.map { position: relative; flex: 1; min-width: 0; height: 395px; background: #bfd9f2; overflow: hidden; }
.map-art { width: 100%; height: 100%; font-family: "Noto Sans", sans-serif; }
.map-art text { paint-order: stroke; stroke: rgba(255,255,255,.7); stroke-width: 6px; }
.city { font-size: 52px; fill: #666; }
.country { font-size: 65px; font-weight: 700; fill: #3a3a52; }
.isle { font-size: 55px; font-weight: 700; fill: #3a3a52; }
.map-btn { position: absolute; display: grid; place-items: center; padding: 0; border: 2px solid #9ab1c8; border-radius: 5px; background: #fff; }
.layers { left: 14px; top: 13px; width: 63px; height: 63px; }
.full-screen { right: 13px; top: 13px; width: 45px; height: 45px; }
.zoom { right: 13px; bottom: 34px; width: 45px; height: 86px; grid-template-rows: 1fr 1fr; place-items: stretch; overflow: hidden; }
.zoom button { display: grid; place-items: center; padding: 2px 0 0; border: 0; background: #fff; }
.zoom button + button { border-top: 1px solid #ccc; }
.credit { position: absolute; right: 0; bottom: 0; padding: 0 6px; background: rgba(255,255,255,.7); color: #333; font: 15px/21px "Liberation Sans", sans-serif; }
.credit a { color: #0078a8; }

.jump { position: absolute; right: 0; top: 280px; width: 31px; height: 94px; padding: 12px 2px 12px 9px; display: flex; flex-direction: column; justify-content: space-between; border: 1px solid #c8c8c8; border-right: 0; background: #fff; }
.jump button { display: flex; justify-content: center; height: 20px; padding: 0; border: 0; background: none; border-top: 1px solid #c8c8c8; }
.jump button + button { align-items: flex-start; border-top: 0; border-bottom: 1px solid #c8c8c8; }
.jump i { border: 6px solid transparent; }
.up { margin-top: 8px; border-top: 0 !important; border-bottom: 10px solid #c8c8c8 !important; }
.down { border-bottom: 0 !important; border-top: 10px solid #c8c8c8 !important; }
.scrollbar { display: flex; justify-content: center; width: 20px; flex: none; padding-top: 4px; border-left: 1px solid #e6e6e6; background: #fafafa; }
.scrollbar i { width: 10px; height: 88%; border-radius: 5px; background: #c1c1c1; }
```
